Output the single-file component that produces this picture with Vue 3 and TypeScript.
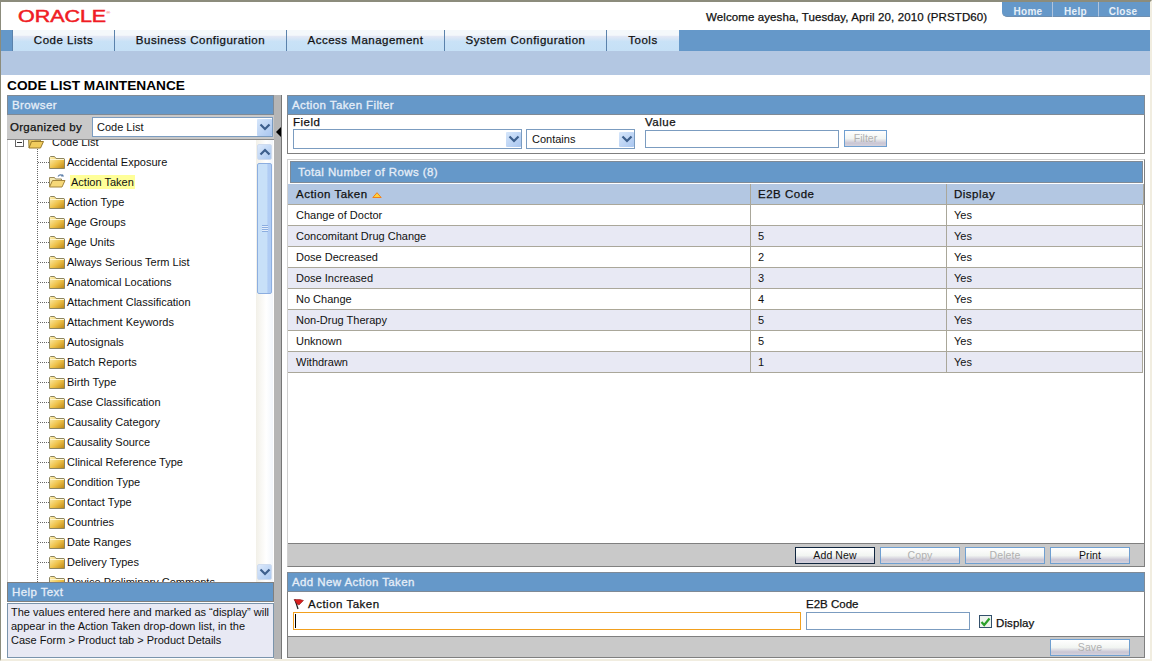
<script setup lang="ts">
const tabs: { label: string; width: number }[] = [
  { label: 'Code Lists', width: 102 },
  { label: 'Business Configuration', width: 172 },
  { label: 'Access Management', width: 158 },
  { label: 'System Configuration', width: 162 },
  { label: 'Tools', width: 73 },
]
const folders: string[] = [
  'Accidental Exposure', 'Action Taken', 'Action Type', 'Age Groups', 'Age Units',
  'Always Serious Term List', 'Anatomical Locations', 'Attachment Classification',
  'Attachment Keywords', 'Autosignals', 'Batch Reports', 'Birth Type', 'Case Classification',
  'Causality Category', 'Causality Source', 'Clinical Reference Type', 'Condition Type',
  'Contact Type', 'Countries', 'Date Ranges', 'Delivery Types', 'Device Preliminary Comments',
]
const rows: [string, string, string][] = [
  ['Change of Doctor', '', 'Yes'],
  ['Concomitant Drug Change', '5', 'Yes'],
  ['Dose Decreased', '2', 'Yes'],
  ['Dose Increased', '3', 'Yes'],
  ['No Change', '4', 'Yes'],
  ['Non-Drug Therapy', '5', 'Yes'],
  ['Unknown', '5', 'Yes'],
  ['Withdrawn', '1', 'Yes'],
]
</script>

<template>
  <div class="page">
    <header class="top">
      <div class="logo">ORACLE<sup>®</sup></div>
      <div class="welcome">Welcome ayesha, Tuesday, April 20, 2010 (PRSTD60)</div>
      <nav class="links">
        <span class="link home">Home</span>
        <span class="link help">Help</span>
        <span class="link close">Close</span>
      </nav>
    </header>
    <div class="nav">
      <div v-for="t in tabs" :key="t.label" class="tab" :style="{ width: t.width + 'px' }">{{ t.label }}</div>
    </div>
    <div class="subnav"></div>
    <h1 class="title">CODE LIST MAINTENANCE</h1>

    <main class="main">
      <aside class="left">
        <div class="phead">Browser</div>
        <div class="org">
          <span class="org-label">Organized by</span>
          <div class="select org-select">
            <span>Code List</span>
            <span class="arrow-btn">
              <svg width="12" height="8" viewBox="0 0 12 8"><path d="M1.5 1.5 6 6l4.500-4.500" fill="none" stroke="#3d5f8c" stroke-width="2.200"/></svg>
            </span>
          </div>
        </div>
        <div class="tree-wrap">
          <div class="tree">
            <div class="tree-root">
              <span class="minus"></span>
              <svg class="root-folder" width="16" height="13" viewBox="0 0 16 13"><path d="M1 12 .5 2.500h5l1 1.500h6v2" fill="#e8c45c" stroke="#9a8a4a"/><path d="M1 12 3.500 5.500H15.500L12.500 12Z" fill="#f1cc5d" stroke="#9a7a2a"/></svg>
              <span class="root-label">Code List</span>
            </div>
            <div class="tree-list">
              <div v-for="(f, i) in folders" :key="f" class="node" :class="{ sel: i === 1 }">
                <span class="dots"></span>
                <svg v-if="i === 1" class="folder open" width="18" height="15" viewBox="0 0 18 15">
                  <path d="M1.500 14V4.500h5l1 1.500h6v2" fill="#f5e9b0" stroke="#9a8a5a"/>
                  <path d="M1.500 14 4.500 7.500H17L14 14Z" fill="#f6d878" stroke="#a3853c"/>
                  <path d="M10 3.500c1.500-2 3.500-2 4.500-.5" fill="none" stroke="#5c7ea8" stroke-width="1.200"/>
                  <path d="M13 3.500h3l-1.200-2.500Z" fill="#5c7ea8"/>
                </svg>
                <svg v-else class="folder" width="16" height="13" viewBox="0 0 16 13">
                  <defs>
                    <linearGradient id="fg" x1="0" y1="0" x2="1" y2="1">
                      <stop offset="0" stop-color="#fff4bc"/>
                      <stop offset=".55" stop-color="#eec24a"/>
                      <stop offset="1" stop-color="#b98212"/>
                    </linearGradient>
                  </defs>
                  <path d="M.5 12.500V1.500L1.500.5h4l1.500 2h8l.500.500v9.500Z" fill="url(#fg)" stroke="#8c8460"/>
                  <path d="M1 3.500h14" stroke="#fff6d0"/>
                </svg>
                <span class="node-label">{{ f }}</span>
              </div>
            </div>
          </div>
          <div class="sb">
            <span class="sb-btn">
              <svg width="12" height="8" viewBox="0 0 12 8"><path d="M1.500 6.500 6 2l4.500 4.500" fill="none" stroke="#3d5f8c" stroke-width="2.200"/></svg>
            </span>
            <div class="sb-track">
              <div class="sb-thumb"><span class="grip"></span></div>
            </div>
            <span class="sb-btn">
              <svg width="12" height="8" viewBox="0 0 12 8"><path d="M1.500 1.500 6 6l4.500-4.500" fill="none" stroke="#3d5f8c" stroke-width="2.200"/></svg>
            </span>
          </div>
        </div>
        <div class="phead help-head">Help Text</div>
        <div class="help-body">The values entered here and marked as “display” will appear in the Action Taken drop-down list, in the Case Form &gt; Product tab &gt; Product Details</div>
      </aside>

      <div class="splitter"><span class="tri"></span></div>

      <section class="right">
        <div class="panel filter">
          <div class="phead">Action Taken Filter</div>
          <div class="filter-body">
            <div class="fcol">
              <label class="flabel">Field</label>
              <div class="select f1">
                <span></span>
                <span class="arrow-btn small">
                  <svg width="12" height="8" viewBox="0 0 12 8"><path d="M1.500 1.500 6 6l4.500-4.500" fill="none" stroke="#3d5f8c" stroke-width="2.200"/></svg>
                </span>
              </div>
            </div>
            <div class="fcol fcol-end">
              <div class="select f2">
                <span>Contains</span>
                <span class="arrow-btn small">
                  <svg width="12" height="8" viewBox="0 0 12 8"><path d="M1.500 1.500 6 6l4.500-4.500" fill="none" stroke="#3d5f8c" stroke-width="2.200"/></svg>
                </span>
              </div>
            </div>
            <div class="fcol vcol">
              <label class="flabel">Value</label>
              <div class="input f3"></div>
            </div>
            <div class="fcol fcol-end">
              <span class="fbtn">Filter</span>
            </div>
          </div>
        </div>

        <div class="grid-panel">
          <div class="grid-head">Total Number of Rows (8)</div>
          <div class="col-head">
            <div class="c1">Action Taken
              <svg class="sort" width="10" height="6" viewBox="0 0 10 6"><path d="M5 .7 9.200 5.500H.8Z" fill="#ffd23c" stroke="#f0801c"/></svg>
            </div>
            <div class="c2">E2B Code</div>
            <div class="c3">Display</div>
          </div>
          <div v-for="(r, i) in rows" :key="r[0]" class="row" :class="{ alt: i % 2 === 1 }">
            <div class="c1">{{ r[0] }}</div>
            <div class="c2">{{ r[1] }}</div>
            <div class="c3">{{ r[2] }}</div>
          </div>
          <div class="grid-space"></div>
          <div class="bar">
            <span class="btn default">Add New</span>
            <span class="btn off">Copy</span>
            <span class="btn off">Delete</span>
            <span class="btn">Print</span>
          </div>
        </div>

        <div class="panel add">
          <div class="phead">Add New Action Taken</div>
          <div class="add-body">
            <div class="acol">
              <label class="alabel">
                <svg width="12" height="12" viewBox="0 0 12 12"><path d="M2 1.500 5 11" stroke="#222" stroke-width="1.300"/><path d="M1 1.500h6l3.500 1L6 7 4 6Z" fill="#d92020" stroke="#7a1010" stroke-width=".5"/></svg>
                Action Taken
              </label>
              <div class="input focused"><span class="caret"></span></div>
            </div>
            <div class="acol">
              <label class="alabel e2b">E2B Code</label>
              <div class="input e2b-input"></div>
            </div>
            <div class="disp">
              <span class="check">
                <svg width="11" height="10" viewBox="0 0 11 10"><path d="M1.500 5 4.200 8 9.500 1.500" fill="none" stroke="#2ba02b" stroke-width="2.200"/></svg>
              </span>
              <span>Display</span>
            </div>
          </div>
          <div class="bar bar-save">
            <span class="btn off">Save</span>
          </div>
        </div>
      </section>
    </main>
  </div>
</template>

<style>
html, body { margin: 0; background: #fff; }
</style>

<style scoped>
.page {
  width: 1152px;
  height: 661px;
  overflow: hidden;
  box-sizing: border-box;
  border-top: 2px solid #8c8c7c;
  border-left: 1px solid #8c8c7c;
  border-right: 2px solid #f1ede0;
  border-bottom: 2px solid #f1ede0;
  font-family: "Liberation Sans", Arial, sans-serif;
  font-size: 11px;
  color: #111;
  letter-spacing: 0;
  background: #fff;
}
.top {
  height: 28px;
  display: flex;
  position: relative;
}
.logo {
  margin: 5px 0 0 17px;
  color: #f01c24;
  font-size: 16px;
  line-height: 19px;
  font-weight: 400;
  letter-spacing: 0;
  transform: scaleX(1.340);
  transform-origin: left center;
  -webkit-text-stroke: .5px #f01c24;
  height: 19px;
}
.logo sup { font-size: 4px; font-weight: 400; vertical-align: 8px; line-height: 0; -webkit-text-stroke: 0; }
.welcome {
  position: absolute;
  left: 705px;
  top: 8px;
  font-size: 11.500px;
  line-height: 14px;
  font-weight: 400;
  -webkit-text-stroke: .25px #111;
  letter-spacing: .1px;
}
.links {
  position: absolute;
  left: 1001px;
  top: 0;
  display: flex;
  height: 15px;
  color: #e8f0f8;
  font-weight: 700;
  font-size: 10px;
  line-height: 19px;
  letter-spacing: .3px;
}
.link {
  background: #6598c9;
  border-bottom: 1px solid #6f8fb0;
  border-right: 1px solid #b0c4dd;
  text-align: center;
  box-sizing: border-box;
  height: 15px;
}
.home { width: 51px; padding-left: 2px; border-bottom-left-radius: 5px; }
.help { width: 46px; }
.close { width: 52px; padding-right: 4px; border-right: 0; }

.nav {
  height: 21px;
  background: #6598c9;
  display: flex;
  padding-left: 11px;
  box-sizing: border-box;
}
.tab {
  box-sizing: border-box;
  height: 21px;
  border-left: 1px solid #5a82ac;
  background: linear-gradient(#f4f8fb 0, #f4f8fb 25%, #e3e8f5 30%, #c9e2f7 55%, #c5e0f6 100%);
  color: #111;
  text-align: center;
  font-size: 11.500px;
  line-height: 20px;
  font-weight: 400;
  -webkit-text-stroke: .25px #111;
  letter-spacing: .5px;
}
.subnav { height: 24px; background: #b3c7e2; }
.title {
  margin: 0;
  height: 20px;
  padding-left: 6px;
  font-size: 13.700px;
  line-height: 21px;
  font-weight: 700;
  color: #000;
  letter-spacing: 0;
}
.main {
  display: flex;
  height: 564px;
  padding-left: 6px;
}
.left {
  width: 267px;
  display: flex;
  flex-direction: column;
}
.phead {
  box-sizing: border-box;
  height: 20px;
  background: #6598c9;
  border: 1px solid #7f8a96;
  color: #e6eef8;
  font-size: 11.500px;
  line-height: 18px;
  padding-left: 4px;
  font-weight: 400;
  -webkit-text-stroke: .3px #e6eef8;
  letter-spacing: .4px;
}
.org {
  height: 25px;
  box-sizing: border-box;
  background: #c9c9c9;
  display: flex;
  align-items: center;
  padding-left: 3px;
  border-bottom: 1px solid #8a8a8a;
}
.org-label {
  font-weight: 400;
  -webkit-text-stroke: .25px #111;
  width: 82px;
  font-size: 11.500px;
  letter-spacing: .3px;
}
.select {
  box-sizing: border-box;
  display: flex;
  justify-content: space-between;
  align-items: center;
  background: #fff;
  border: 1px solid #7b9cc0;
  padding-left: 4px;
}
.org-select { width: 181px; height: 20px; }
.arrow-btn {
  width: 15px;
  height: 17px;
  background: linear-gradient(135deg, #d6e6fa, #a9c6f0);
  display: flex;
  align-items: center;
  justify-content: center;
  border-radius: 1px;
}
.arrow-btn.small { height: 15px; }
.tree-wrap {
  height: 442px;
  box-sizing: border-box;
  display: flex;
  overflow: hidden;
  background: #fff;
  border-left: 1px solid #d8d8d8;
}
.tree {
  flex: 1;
  overflow: hidden;
  min-width: 0;
}
.tree-root {
  height: 13px;
  margin-top: -4px;
  display: flex;
  align-items: flex-end;
  padding-left: 7px;
  position: relative;
}
.minus {
  width: 7px;
  height: 7px;
  border: 1px solid #666;
  position: relative;
  margin-bottom: 2px;
}
.minus::after {
  content: "";
  position: absolute;
  left: 1px;
  right: 1px;
  top: 3px;
  height: 1px;
  background: #333;
}
.root-folder { margin-left: 4px; }
.root-label { margin-left: 8px; line-height: 13px; }
.tree-list {
  margin-left: 29px;
  border-left: 1px dotted #666;
  padding-top: 3px;
}
.node {
  height: 20px;
  display: flex;
  align-items: center;
}
.dots {
  width: 11px;
  border-top: 1px dotted #666;
}
.folder { flex: none; }
.folder.open { margin-left: -1px; margin-top: -3px; }
.node-label {
  margin-left: 2px;
  line-height: 14px;
}
.sel .node-label {
  margin-left: 4px;
  background: #ffff99;
  padding: 0 1px;
}
.sb {
  width: 17px;
  margin-right: 1px;
  background: linear-gradient(90deg, #f2f0e8, #fff 60%, #f2f6fb);
  display: flex;
  flex-direction: column;
  align-items: center;
  padding: 4px 0 2px;
  box-sizing: border-box;
}
.sb-btn {
  box-sizing: border-box;
  width: 15px;
  height: 16px;
  flex: none;
  background: linear-gradient(135deg, #dce9fb, #aac8f0);
  border: 1px solid #cfdcef;
  border-radius: 2px;
  display: flex;
  align-items: center;
  justify-content: center;
}
.sb-track {
  flex: 1;
  padding-top: 3px;
  width: 15px;
}
.sb-thumb {
  box-sizing: border-box;
  height: 131px;
  border: 1px solid #8caee0;
  border-radius: 2px;
  background: linear-gradient(90deg, #c8e0f8 0, #c8e0f8 70%, #b0ccf4 75%, #b0ccf4 100%);
  display: flex;
  align-items: center;
  justify-content: center;
}
.grip {
  width: 6px;
  height: 7px;
  background: repeating-linear-gradient(#8caee0 0 1px, #e4eefb 1px 2px);
}
.help-head { border-color: #7f7f7f; }
.help-body {
  box-sizing: border-box;
  margin-top: 1px;
  height: 55px;
  background: #e8e9f4;
  border: 1px solid #7a94ac;
  padding: 1px 3px;
  line-height: 14px;
  font-size: 11px;
  letter-spacing: 0;
}
.splitter {
  box-sizing: border-box;
  width: 8px;
  background: #b5b5b5;
  border-right: 1px solid #777;
  position: relative;
  margin-right: 5px;
}
.tri {
  position: absolute;
  left: 2px;
  top: 32px;
  border: 5px solid transparent;
  border-right: 5px solid #000;
  border-left: 0;
}
.right {
  width: 858px;
  display: flex;
  flex-direction: column;
}
.panel {
  box-sizing: border-box;
  border-left: 1px solid #7f7f7f;
  border-right: 1px solid #7f7f7f;
  border-bottom: 1px solid #7f7f7f;
}
.panel .phead { margin: 0 -1px; }
.filter { height: 59px; }
.filter-body {
  display: flex;
  padding-left: 5px;
  height: 38px;
}
.fcol { display: flex; flex-direction: column; }
.fcol-end { justify-content: flex-end; padding-bottom: 4px; box-sizing: border-box; }
.flabel {
  height: 13px;
  line-height: 15px;
  font-weight: 400;
  -webkit-text-stroke: .25px #111;
  font-size: 11.500px;
  letter-spacing: .5px;
}
.f1 { width: 229px; height: 20px; margin-top: 1px; }
.f2 { width: 109px; height: 20px; margin-left: 4px; padding-left: 5px; }
.vcol { margin-left: 10px; }
.input {
  box-sizing: border-box;
  background: #fff;
  border: 1px solid #7b9cc0;
}
.f3 { width: 194px; height: 18px; margin-top: 2px; }
.fbtn {
  margin-left: 5px;
  box-sizing: border-box;
  width: 43px;
  height: 17px;
  border: 1px solid #6f9fd0;
  background: linear-gradient(#fff 0, #f2f5f2 50%, #c9c5d4 80%, #d4d2dc 100%);
  color: #b0b0b0;
  text-align: center;
  line-height: 15px;
  font-size: 10.500px;
  margin-bottom: 2px;
}
.grid-panel {
  box-sizing: border-box;
  margin-top: 5px;
  height: 408px;
  border: 1px solid #7f7f7f;
  border-top-color: #d0d0d0;
  border-left-color: #d0d0d0;
  padding: 1px 0 0;
  display: flex;
  flex-direction: column;
}
.grid-head {
  box-sizing: border-box;
  margin: 0 1px 0 2px;
  height: 22px;
  background: #6598c9;
  border: 1px solid #7f8a96;
  color: #e6eef8;
  font-size: 11.500px;
  line-height: 20px;
  padding-left: 7px;
  -webkit-text-stroke: .3px #e6eef8;
  letter-spacing: .4px;
}
.col-head {
  margin-top: 1px;
  display: flex;
  height: 21px;
  box-sizing: border-box;
  background: #b3c7e2;
  border-bottom: 1px solid #aaa79a;
  -webkit-text-stroke: .25px #111;
  font-size: 11.500px;
  line-height: 20px;
  letter-spacing: .5px;
}
.row {
  display: flex;
  height: 21px;
  box-sizing: border-box;
  border-bottom: 1px solid #aaa79a;
  line-height: 20px;
  margin-right: 1px;
}
.row.alt { background: #e8e9f4; }
.c1, .c2, .c3 { box-sizing: border-box; padding-left: 7px; }
.c1 { width: 463px; padding-left: 8px; border-right: 1px solid #aaa79a; }
.c2 { width: 196px; border-right: 1px solid #aaa79a; }
.c3 { flex: 1; border-right: 1px solid #aaa79a; }
.sort { margin-left: 1px; }
.grid-space { flex: 1; }
.bar {
  box-sizing: border-box;
  height: 23px;
  background: #c9c9c9;
  border-top: 1px solid #7f7f7f;
  display: flex;
  justify-content: flex-end;
  align-items: center;
  padding-right: 14px;
  gap: 5px;
}
.btn {
  box-sizing: border-box;
  width: 80px;
  height: 17px;
  border: 1px solid #6f9fd0;
  background: linear-gradient(#fff 0, #f2f5f2 50%, #c9c5d4 80%, #d4d2dc 100%);
  text-align: center;
  line-height: 15px;
  font-size: 10.500px;
  letter-spacing: .1px;
}
.btn.default { border-color: #10263f; }
.btn.off { color: #b0b0b0; }
.add {
  margin-top: 5px;
  height: 86px;
}
.add-body {
  display: flex;
  height: 44px;
  padding-left: 5px;
}
.acol { display: flex; flex-direction: column; }
.alabel {
  height: 16px;
  margin-top: 4px;
  display: flex;
  align-items: center;
  gap: 3px;
  -webkit-text-stroke: .25px #111;
  font-size: 11.500px;
  line-height: 14px;
  letter-spacing: .5px;
}
.focused {
  width: 508px;
  height: 18px;
  border-color: #f2a01e;
  position: relative;
}
.caret {
  position: absolute;
  left: 1px;
  top: 1px;
  width: 1px;
  height: 14px;
  background: #000;
}
.e2b-input { width: 164px; height: 18px; margin-left: 5px; }
.e2b { margin-left: 5px; letter-spacing: 0; }
.disp {
  margin-left: 9px;
  margin-top: 22px;
  display: flex;
  align-items: flex-start;
  gap: 4px;
  -webkit-text-stroke: .25px #111;
  font-size: 11.500px;
  line-height: 18px;
  letter-spacing: .1px;
}
.check {
  box-sizing: border-box;
  width: 13px;
  height: 13px;
  border: 1px solid #33506c;
  background: #eef4ee;
  display: flex;
  align-items: center;
  justify-content: center;
  margin-top: 1px;
}
.bar-save { margin: 0; height: 21px; }
</style>
